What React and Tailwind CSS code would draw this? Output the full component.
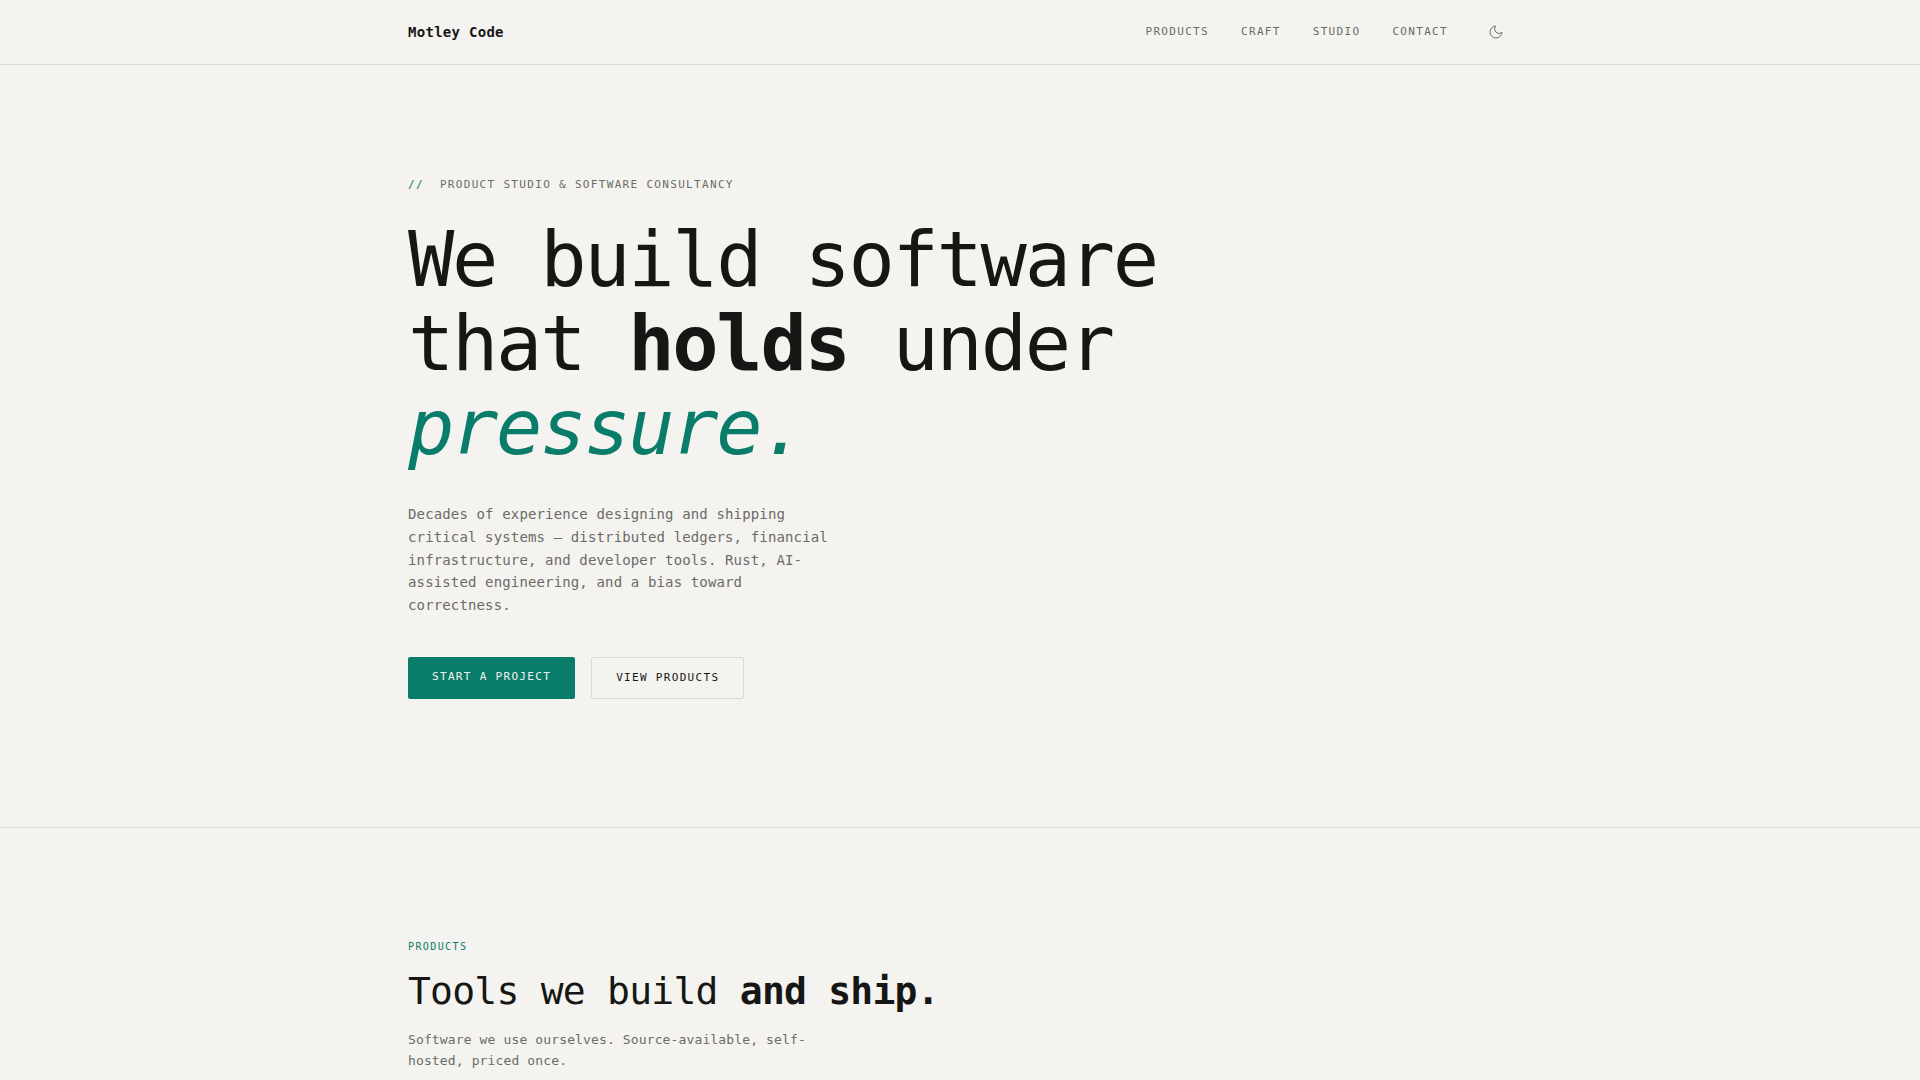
import React from "react";

const NAV_LINKS = [
  { label: "Products", href: "#products" },
  { label: "Craft", href: "#craft" },
  { label: "Studio", href: "#studio" },
  { label: "Contact", href: "#contact" },
];

function Header() {
  return (
    <header className="border-b border-[#d8d8d0]">
      <div className="mx-auto flex h-16 max-w-6xl items-center justify-between px-6">
        <a href="#top" className="text-sm font-bold tracking-[0.02em]">
          Motley Code
        </a>
        <nav className="flex items-center gap-8">
          {NAV_LINKS.map((link) => (
            <a key={link.href} href={link.href} className="text-[11px] uppercase tracking-[0.12em] text-[#6b6b68]">
              {link.label}
            </a>
          ))}
          <button type="button" aria-label="Toggle theme" className="flex size-8 items-center justify-center text-[#6b6b68]">
            <svg viewBox="0 0 24 24" className="size-4" fill="none" stroke="currentColor" strokeWidth="1.5">
              <path d="M21 12.79A9 9 0 1 1 11.21 3 7 7 0 0 0 21 12.79z" />
            </svg>
          </button>
        </nav>
      </div>
    </header>
  );
}

function Hero() {
  return (
    <section id="top" className="border-b border-[#d8d8d4]">
      <div className="mx-auto max-w-6xl px-6 pt-28 pb-32">
        <p className="flex gap-4 text-[11px] leading-4 uppercase tracking-[0.12em] text-[#6b6b68]">
          <span className="text-[#0a7c6a]">//</span>
          Product studio &amp; software consultancy
        </p>
        <h1 className="mt-[25px] max-w-[800px] text-[77px] leading-[84px] tracking-[-0.03em]">
          We build software that <strong className="font-bold">holds</strong> under{" "}
          <em className="text-[#0a7c6a]">pressure.</em>
        </h1>
        <p className="mt-[33px] max-w-[440px] text-sm leading-relaxed tracking-[0.01em] text-[#6b6b68]">
          Decades of experience designing and shipping critical systems — distributed ledgers, financial
          infrastructure, and developer tools. Rust, AI-assisted engineering, and a bias toward correctness.
        </p>
        <div className="mt-10 flex gap-4 text-[11px] leading-4 uppercase tracking-[0.12em]">
          <a href="#contact" className="rounded-xs bg-[#0a7c6a] px-6 py-3 text-[#f4f3ef]">
            Start a project
          </a>
          <a href="#products" className="rounded-xs border border-[#d8d8d4] px-6 py-3">
            View products
          </a>
        </div>
      </div>
    </section>
  );
}

function Products() {
  return (
    <section id="products">
      <div className="mx-auto max-w-6xl px-6 pt-28">
        <p className="text-[10px] leading-[13px] uppercase tracking-[0.14em] text-[#0a7c6a]">Products</p>
        <h2 className="mt-4 text-[38px] leading-[44px] tracking-[-0.02em]">
          Tools we build <strong className="font-bold">and ship.</strong>
        </h2>
        <p className="mt-4 max-w-[420px] text-[13px] leading-relaxed tracking-[0.01em] text-[#6b6b68]">
          Software we use ourselves. Source-available, self-hosted, priced once.
        </p>
      </div>
    </section>
  );
}

export default function App() {
  return (
    <div className="min-h-screen bg-[#f4f3ef] font-['DejaVu_Sans_Mono',monospace] text-[#161615]">
      <Header />
      <main>
        <Hero />
        <Products />
      </main>
    </div>
  );
}
